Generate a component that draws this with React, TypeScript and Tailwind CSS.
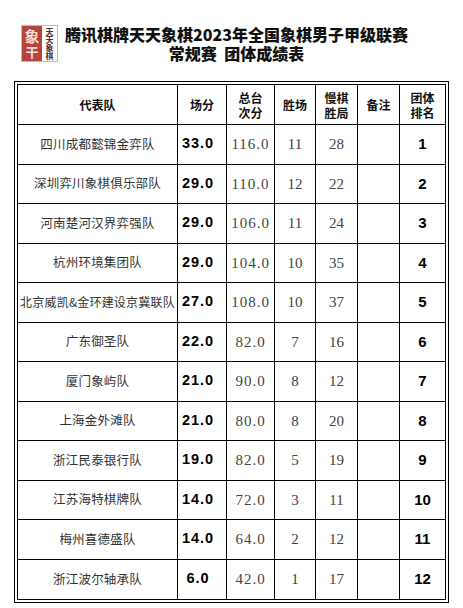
import React from 'react'

type Row = {
  team: string
  score: string
  total: string
  wins: string
  games: string
  rank: string
}

const ROWS: Row[] = [
  { team: '四川成都懿锦金弈队', score: '33.0', total: '116.0', wins: '11', games: '28', rank: '1' },
  { team: '深圳弈川象棋俱乐部队', score: '29.0', total: '110.0', wins: '12', games: '22', rank: '2' },
  { team: '河南楚河汉界弈强队', score: '29.0', total: '106.0', wins: '11', games: '24', rank: '3' },
  { team: '杭州环境集团队', score: '29.0', total: '104.0', wins: '10', games: '35', rank: '4' },
  { team: '北京威凯&金环建设京冀联队', score: '27.0', total: '108.0', wins: '10', games: '37', rank: '5' },
  { team: '广东御圣队', score: '22.0', total: '82.0', wins: '7', games: '16', rank: '6' },
  { team: '厦门象屿队', score: '21.0', total: '90.0', wins: '8', games: '12', rank: '7' },
  { team: '上海金外滩队', score: '21.0', total: '80.0', wins: '8', games: '20', rank: '8' },
  { team: '浙江民泰银行队', score: '19.0', total: '82.0', wins: '5', games: '19', rank: '9' },
  { team: '江苏海特棋牌队', score: '14.0', total: '72.0', wins: '3', games: '11', rank: '10' },
  { team: '梅州喜德盛队', score: '14.0', total: '64.0', wins: '2', games: '12', rank: '11' },
  { team: '浙江波尔轴承队', score: '6.0', total: '42.0', wins: '1', games: '17', rank: '12' },
]

const COLS = 'grid grid-cols-[160px_49px_48px_41px_42px_42px_1fr]'
const cjk = "font-['Noto_Sans_CJK_SC',sans-serif]"
const serif = "font-['Liberation_Serif','Noto_Sans_CJK_SC',serif]"
const sans = "font-['Liberation_Sans',Arial,sans-serif]"

const Cell: React.FC<{ children?: React.ReactNode; last?: boolean; className?: string }> = ({ children, last, className = '' }) => (
  <div className={`flex items-center justify-center whitespace-nowrap text-center ${last ? '' : 'border-r border-black'} ${className}`}>
    {children}
  </div>
)

// 左上角印章
const Seal = () => (
  <div className="flex h-[37px] w-[37px] border border-[#c9b9b0] bg-white">
    <div className={`flex w-[20px] flex-col items-center justify-center bg-[#b5453c] text-[15px] font-bold leading-[16px] text-[#f3ddd6] ${cjk}`}>
      <span>象</span>
      <span className="text-[13px]">干</span>
    </div>
    <div className={`flex flex-1 items-center justify-center overflow-hidden ${cjk}`}>
      <span className="text-[8px] font-bold leading-[9px] text-[#5a2a26] [writing-mode:vertical-rl]">天天象棋</span>
    </div>
  </div>
)

export default function App() {
  return (
    <div className="h-[608px] w-[463px] overflow-hidden bg-white">
      {/* 标题 */}
      <div className="relative pt-[25px]">
        <div className="absolute left-[21px] top-[25px]">
          <Seal />
        </div>
        <div className={`pl-[10px] text-center text-[16px] font-black leading-[19px] text-[#111] ${cjk}`}>
          <div>腾讯棋牌天天象棋2023年全国象棋男子甲级联赛</div>
          <div>常规赛&nbsp;&nbsp;团体成绩表</div>
        </div>
      </div>

      {/* 成绩表 */}
      <div className="mx-[14px] mt-[18px] border-[4px] border-double border-black">
        <div className={`${COLS} h-[40px] border-b border-black text-[12px] font-bold leading-[15px] text-[#111] ${cjk}`}>
          <Cell>代表队</Cell>
          <Cell>场分</Cell>
          <Cell>总台<br />次分</Cell>
          <Cell>胜场</Cell>
          <Cell>慢棋<br />胜局</Cell>
          <Cell>备注</Cell>
          <Cell last>团体<br />排名</Cell>
        </div>
        {ROWS.map((r, i) => (
          <div
            key={r.rank}
            className={`${COLS} h-[39.5px] ${i < ROWS.length - 1 ? 'border-b border-black' : ''}`}
          >
            <Cell className={`text-[12.5px] tracking-[0.2px] text-[#333] ${cjk} ${r.team.length > 11 ? 'text-[12px] tracking-[-0.3px]' : ''}`}>{r.team}</Cell>
            <Cell className={`pr-[8px] text-[14.5px] font-bold tracking-[1px] text-black ${sans}`}>{r.score}</Cell>
            <Cell className={`text-[15px] tracking-[1px] text-[#444] ${serif}`}>{r.total}</Cell>
            <Cell className={`text-[15px] text-[#444] ${serif}`}>{r.wins}</Cell>
            <Cell className={`text-[15px] text-[#444] ${serif}`}>{r.games}</Cell>
            <Cell />
            <Cell last className={`text-[15px] font-bold text-black ${sans}`}>{r.rank}</Cell>
          </div>
        ))}
      </div>
    </div>
  )
}
